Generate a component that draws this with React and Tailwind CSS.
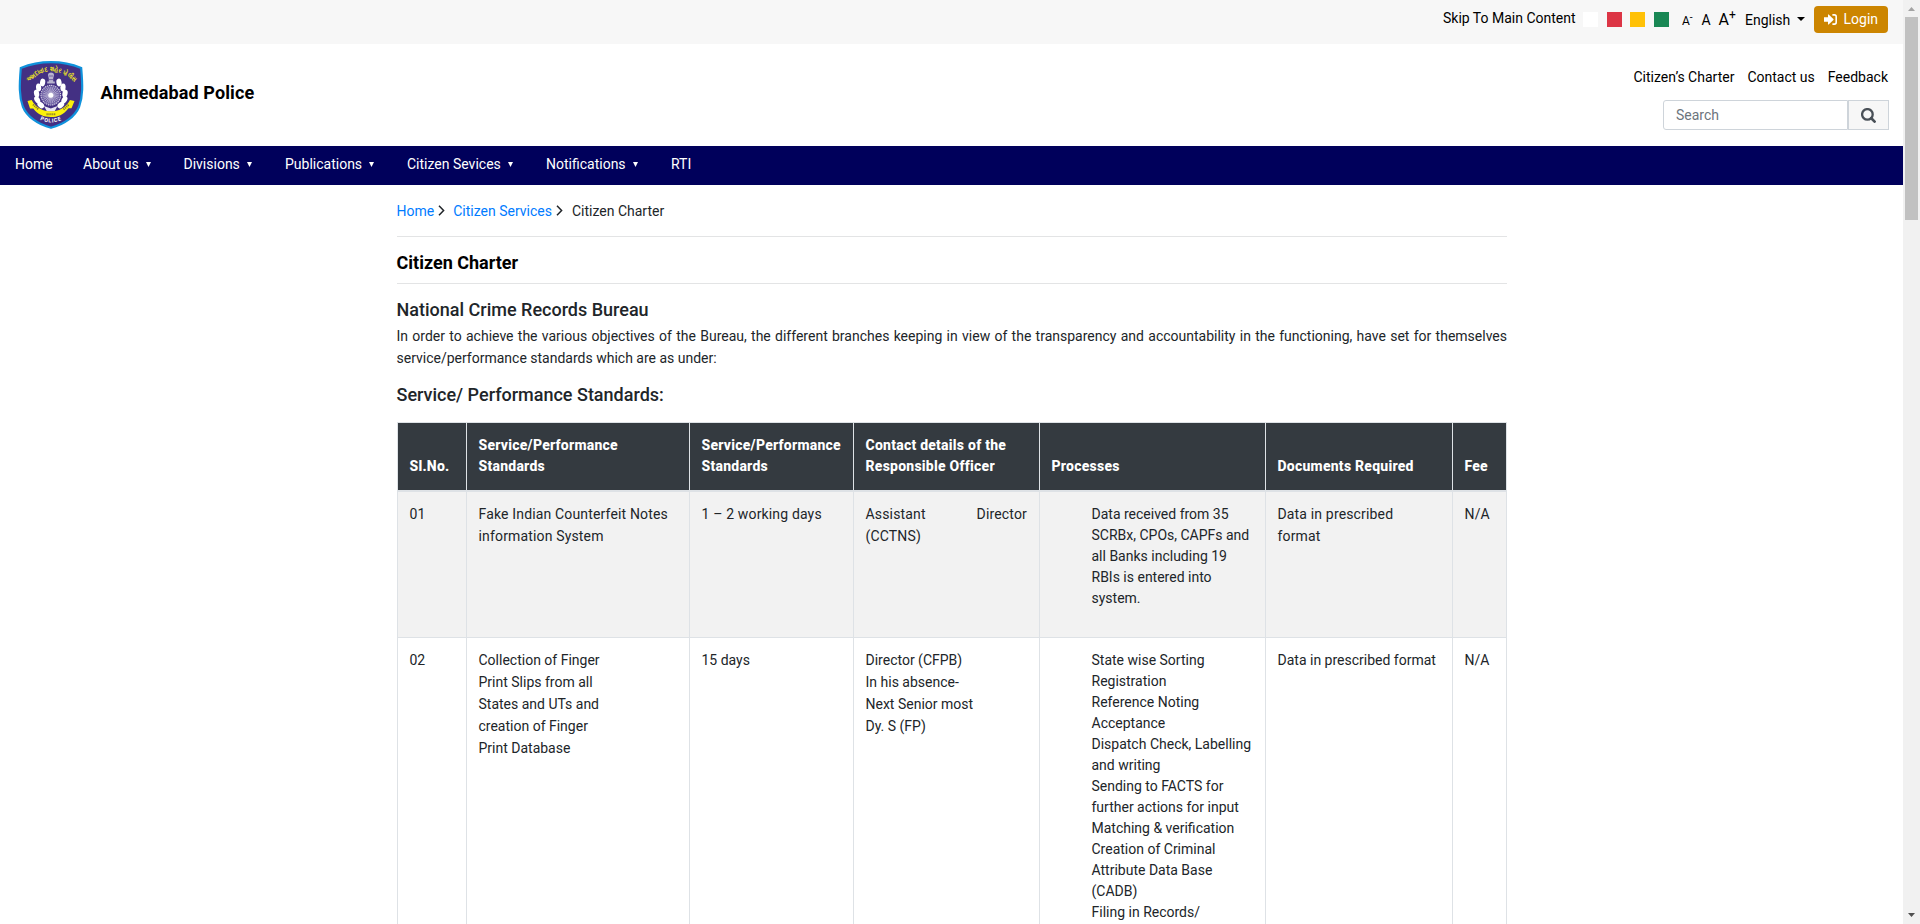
import React from "react";

const nav = [
  { label: "Home", cls: "w-[68px]" },
  { label: "About us", menu: true, cls: "w-[100.5px]" },
  { label: "Divisions", menu: true, cls: "w-[101.5px]" },
  { label: "Publications", menu: true, cls: "w-[122px]" },
  { label: "Citizen Sevices", menu: true, cls: "w-[139px]" },
  { label: "Notifications", menu: true, cls: "w-[125px]" },
  { label: "RTI", cls: "w-[40px]" },
];

function Emblem() {
  const leaves = [
    [24.6, 22.5, 10], [20.6, 27.5, -5], [18.6, 33.5, -12], [19.2, 39.8, -30], [22.8, 45, -48],
  ];
  const rays = Array.from({ length: 24 }, (_, i) => (i * Math.PI) / 12);
  return (
    <svg viewBox="0 0 66 70" className="h-[70px] w-[66px]">
      <defs>
        <path id="arcTop" d="M10.5 22.5 Q33.5 -0.5 57 23" />
        <path id="arcLow" d="M22 59.8 Q33 65.2 44.5 59.6" />
      </defs>
      <path
        d="M33 2.2 C25 2.2 14 3.4 2.8 8 C1.4 25 1 36 4.8 46.5 C8.8 56.5 20 64.5 33 67.8 C46 64.5 57.2 56.5 61.2 46.5 C65 36 64.6 25 63.2 8 C52 3.4 41 2.2 33 2.2 Z"
        fill="#433083"
        stroke="#0f92dc"
        strokeWidth="2.2"
      />
      <text fill="#f5ec1a" fontSize="6.8" fontWeight="700" fontFamily="Noto Sans, sans-serif">
        <textPath href="#arcTop" textLength="53" lengthAdjust="spacingAndGlyphs">અમદાવાદ શહેર પોલીસ</textPath>
      </text>
      <path d="M30 15 Q30 12.4 33 12.4 Q36 12.4 36 15 L35.2 18.5 V21.5 H36.8 V23.6 H29.2 V21.5 H30.8 V18.5 Z" fill="#b9b4cf" />
      <path d="M30.6 19.6 H35.4 M31 16 H35" stroke="#5c4c94" strokeWidth="0.8" />
      {leaves.map(([x, y, r]) => (
        <g key={y} fill="#fff">
          <ellipse cx={x} cy={y} rx="2.6" ry="3.9" transform={`rotate(${r} ${x} ${y})`} />
          <ellipse cx={65.6 - x} cy={y} rx="2.6" ry="3.9" transform={`rotate(${-r} ${65.6 - x} ${y})`} />
        </g>
      ))}
      <path d="M26 46 L32.8 48.5 L39.6 46 L36.5 51.5 H29 Z" fill="#e9e6f2" />
      <circle cx="32.8" cy="35.2" r="10.8" fill="#433083" />
      <circle cx="32.8" cy="35.2" r="9.8" fill="#6e60a4" stroke="#dcd8ea" strokeWidth="1.1" strokeDasharray="1.3 0.8" />
      {rays.map((a) => (
        <line key={a} x1="32.8" y1="35.2" x2={32.8 + 8.4 * Math.cos(a)} y2={35.2 + 8.4 * Math.sin(a)} stroke="#d5d0e6" strokeWidth="0.6" />
      ))}
      <circle cx="32.8" cy="35.2" r="2.5" fill="#fff" />
      <path
        d="M9.5 41 L13.6 40 C18.5 48.5 25.5 51.3 32.8 51.3 C40.5 51.3 47.5 48.5 52 40 L56.5 41 L53.5 48.2 L50.5 48.2 C45.5 55 39.8 57 32.8 57 C25.8 57 20 55 15.3 48.6 L12 48.6 Z"
        fill="#fbf10b"
      />
      <path d="M15 44.5 L20.5 49.5 M45.5 49.5 L51 44.5 M28.5 54.3 L37.5 54.3" stroke="#8d7d2c" strokeWidth="2" strokeDasharray="1.2 0.7" />
      <text fill="#fff" fontSize="5.4" fontWeight="700" fontFamily="Roboto, sans-serif">
        <textPath href="#arcLow" textLength="22">POLICE</textPath>
      </text>
    </svg>
  );
}

function Chevron({ className }) {
  return (
    <svg viewBox="0 0 7 11" className={className} fill="none" stroke="#212529" strokeWidth="1.5">
      <path d="M1 0.8 L5.6 5.5 L1 10.2" />
    </svg>
  );
}

function SignIn() {
  return (
    <svg viewBox="0 0 13 11" className="mr-[7px] h-[11px] w-[13px]">
      <path d="M0 3.2H4V0.9Q4 -0.1 4.9 0.7L9.4 5Q9.8 5.5 9.4 6L4.9 10.3Q4 11.1 4 10.1V7.8H0Z" fill="#fff" />
      <path d="M8.4 0.9H10.4Q12.2 0.9 12.2 2.7V8.3Q12.2 10.1 10.4 10.1H8.4" fill="none" stroke="#fff" strokeWidth="1.6" />
    </svg>
  );
}

function Magnifier() {
  return (
    <svg viewBox="0 0 15 15" className="h-[15px] w-[15px]" fill="none" stroke="#495057">
      <circle cx="6.4" cy="6.4" r="5.3" strokeWidth="2.3" />
      <path d="M10.3 10.3L13.6 13.6" strokeWidth="2.7" strokeLinecap="round" />
    </svg>
  );
}

function TopBar() {
  return (
    <div className="flex h-11 items-start justify-end bg-[#f7f7f7] pr-[15px] text-black">
      <span className="mt-[7px] w-[140px] whitespace-nowrap leading-[22px]">Skip To Main Content</span>
      <div className="mt-3 flex h-[15px]">
        <span className="w-[15px] bg-white" />
        <span className="ml-[9px] w-[15px] bg-[#dc3545]" />
        <span className="ml-2 w-[15px] bg-[#ffc107]" />
        <span className="ml-[9px] w-[15px] bg-[#198754]" />
      </div>
      <div className="ml-[13px] mt-[9px] flex leading-[22px]">
        <span className="w-[19.5px] text-[12px] leading-[24px]">A<sup className="-top-1 text-[10px]">-</sup></span>
        <span className="w-[17px] text-[14px]">A</span>
        <span className="w-[26.5px] text-[16px] leading-[21px]">A<sup className="-top-1.5 text-[12px]">+</sup></span>
      </div>
      <span className="mt-[9px] w-[52px] leading-[22px]">English</span>
      <svg viewBox="0 0 8 4" className="mt-[17px] h-1 w-2"><path d="M0 0H8L4 4Z" fill="#000" /></svg>
      <button className="ml-[9px] mt-1.5 flex h-[27px] w-[74px] items-center rounded bg-[#cc8500] pl-[9.5px] text-white">
        <SignIn />
        <span>Login</span>
      </button>
    </div>
  );
}

function Header() {
  return (
    <header className="flex h-[102px] justify-between pl-[18px] pr-[14px]">
      <div className="flex pt-[16px]">
        <Emblem />
        <span className="ml-[16.5px] mt-[19px] text-[18px] font-bold leading-[27px] tracking-[0.12px] text-black">Ahmedabad Police</span>
      </div>
      <div className="flex flex-col items-end pt-[22px]">
        <div className="flex gap-[13px] pr-px leading-[22px] text-black">
          <span>Citizen’s Charter</span>
          <span>Contact us</span>
          <span>Feedback</span>
        </div>
        <div className="mt-[12px] flex h-[30px] w-[226px]">
          <div className="flex w-[185px] items-center rounded-l-[3px] border border-[#ced4da] pl-3 text-[#6c757d]">Search</div>
          <div className="flex w-[41px] items-center justify-center border border-[#ced4da] bg-[#f7f7f7] pt-px">
            <Magnifier />
          </div>
        </div>
      </div>
    </header>
  );
}

const cols = ["w-[69px]", "w-[223px]", "w-[164px]", "w-[186px]", "w-[226px]", "w-[187px]", "w-[54px]"];
const heads = [
  ["Sl.No."],
  ["Service/Performance", "Standards"],
  ["Service/Performance", "Standards"],
  ["Contact details of the", "Responsible Officer"],
  ["Processes"],
  ["Documents Required"],
  ["Fee"],
];
const rows = [
  {
    cells: [["01"], ["Fake Indian Counterfeit Notes", "information System"], ["1 – 2 working days"], null, null, ["Data in prescribed", "format"], ["N/A"]],
    officer: (
      <>
        <div className="flex justify-between"><span>Assistant</span><span>Director</span></div>
        <div>(CCTNS)</div>
      </>
    ),
    list: ["Data received from 35", "SCRBx, CPOs, CAPFs and", "all Banks including 19", "RBIs is entered into", "system."],
  },
  {
    cells: [
      ["02"],
      ["Collection of Finger", "Print Slips from all", "States and UTs and", "creation of Finger", "Print Database"],
      ["15 days"], null, null, ["Data in prescribed format"], ["N/A"],
    ],
    officer: ["Director (CFPB)", "In his absence-", "Next Senior most", "Dy. S (FP)"].map((t) => <div key={t}>{t}</div>),
    list: [
      "State wise Sorting", "Registration", "Reference Noting", "Acceptance", "Dispatch Check, Labelling", "and writing",
      "Sending to FACTS for", "further actions for input", "Matching & verification", "Creation of Criminal", "Attribute Data Base",
      "(CADB)", "Filing in Records/",
    ],
  },
];

function Standards() {
  return (
    <div className="mt-[16px] flex w-[1110px] flex-col border-l border-t border-[#dee2e6]">
      <div className="flex h-[69px] border-b-2 border-[#dee2e6] bg-[#343a40] font-extrabold leading-[21px] tracking-[0.24px] text-white">
        {heads.map((lines, i) => (
          <div key={i} className={`flex shrink-0 flex-col justify-end whitespace-nowrap border-r border-[#dee2e6] pb-[13px] pl-[12px] ${cols[i]}`}>
            {lines.map((l) => <span key={l}>{l}</span>)}
          </div>
        ))}
      </div>
      {rows.map((r, k) => (
        <div key={k} className={`flex border-b border-[#dee2e6] leading-[22px] ${k === 0 ? "h-[146px] bg-[#f2f2f2] tracking-[0.16px]" : "h-[400px]"}`}>
          {r.cells.map((c, i) => (
            <div key={i} className={`shrink-0 whitespace-nowrap border-r border-[#dee2e6] pl-[12px] pr-[11.5px] pt-[11px] ${cols[i]}`}>
              {i === 3 && r.officer}
              {i === 4 && (
                <div className="pl-10 pt-px leading-[21px] tracking-normal">{r.list.map((l) => <div key={l}>{l}</div>)}</div>
              )}
              {c && c.map((l) => <div key={l}>{l}</div>)}
            </div>
          ))}
        </div>
      ))}
    </div>
  );
}

function ScrollBar() {
  return (
    <div className="flex h-full w-[17px] flex-col items-center bg-[#f1f1f1]">
      <svg viewBox="0 0 7 4" className="mt-[7px] h-1 w-[7px]"><path d="M3.5 0L7 4H0Z" fill="#a3a3a3" /></svg>
      <div className="mt-[6px] h-[203px] w-[13px] bg-[#c1c1c1]" />
      <svg viewBox="0 0 7 4" className="mb-[7px] mt-auto h-1 w-[7px]"><path d="M0 0H7L3.5 4Z" fill="#505050" /></svg>
    </div>
  );
}

export default function App() {
  return (
    <div className="flex h-[924px] w-[1920px] overflow-hidden bg-white font-['Roboto',sans-serif] text-[14px] text-[#212529]">
      <div className="w-[1903px] overflow-hidden">
        <TopBar />
        <Header />
        <nav className="flex h-[39px] bg-[#00005b] pl-[15px] leading-[22px] text-white">
          {nav.map((n) => (
            <div key={n.label} className={`flex shrink-0 whitespace-nowrap pt-[7px] ${n.cls}`}>
              {n.label}
              {n.menu && (
                <svg viewBox="0 0 5 5" className="ml-[7px] mt-[9px] h-[5px] w-[5px]"><path d="M0 0H5L2.5 5Z" fill="#fff" /></svg>
              )}
            </div>
          ))}
        </nav>
        <main className="ml-[396.5px] w-[1110.5px]">
          <div className="flex h-[52px] items-center border-b border-[#e3e4e5] leading-[22px]">
            <span className="text-[#007bff]">Home</span>
            <Chevron className="-mt-px ml-1 mr-2 h-[11px] w-[7px]" />
            <span className="text-[#007bff]">Citizen Services</span>
            <Chevron className="-mt-px ml-1 mr-[9px] h-[11px] w-[7px]" />
            <span>Citizen Charter</span>
          </div>
          <h1 className="h-[47px] border-b border-[#e3e4e5] pt-[12px] text-[18px] font-bold leading-[27px] text-black">Citizen Charter</h1>
          <h2 className="pt-[15px] text-[18px] font-medium leading-[22px]">National Crime Records Bureau</h2>
          <p className="mt-1 text-justify leading-[22px]">
            In order to achieve the various objectives of the Bureau, the different branches keeping in view of the transparency and
            accountability in the functioning, have set for themselves service/performance standards which are as under:
          </p>
          <h2 className="pt-[15px] text-[18px] font-medium leading-[22px]">Service/ Performance Standards:</h2>
          <Standards />
        </main>
      </div>
      <ScrollBar />
    </div>
  );
}
